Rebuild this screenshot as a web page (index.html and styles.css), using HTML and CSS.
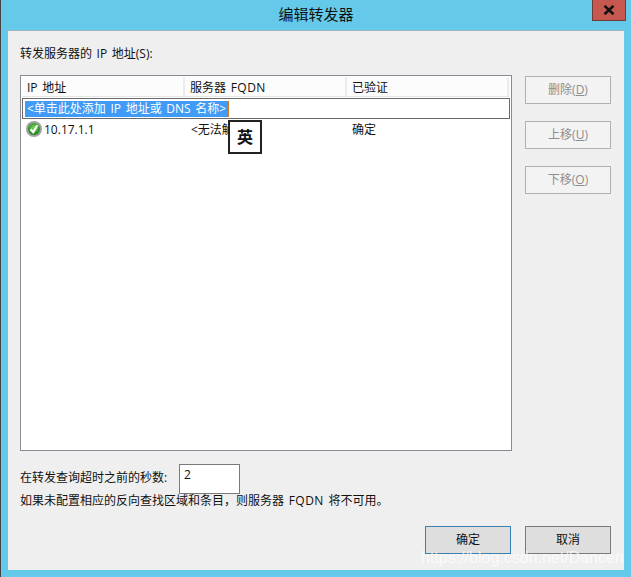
FILE: index.html
```html
<!DOCTYPE html>
<html lang="zh-CN">
<head>
<meta charset="utf-8">
<title>编辑转发器</title>
<link rel="stylesheet" href="styles.css">
</head>
<body>
<div class="window">
  <header class="titlebar">
    <span class="title">编辑转发器</span>
    <button class="close" aria-label="关闭"><svg width="12" height="10" viewBox="0 0 12 10"><path d="M1.5 0.8 L10.5 9.2 M10.5 0.8 L1.5 9.2" stroke="#111" stroke-width="2.6" fill="none"/></svg></button>
  </header>
  <main class="panel">
    <div class="caption">转发服务器的 IP 地址(S):</div>
    <div class="top">
      <div class="list">
        <div class="head">
          <div class="hcell c1">IP 地址</div>
          <div class="hcell c2">服务器 <span class="latin">FQDN</span></div>
          <div class="hcell c3">已验证</div>
        </div>
        <div class="edit"><span class="sel">&lt;单击此处添加 IP 地址或 DNS 名称&gt;</span></div>
        <div class="row">
          <div class="cell c1 ip">
            <svg class="ok" width="16" height="16" viewBox="0 0 16 16">
              <defs><radialGradient id="g" cx="50%" cy="40%" r="60%"><stop offset="0" stop-color="#7fd858"/><stop offset="1" stop-color="#17801a"/></radialGradient></defs>
              <circle cx="8" cy="8" r="8" fill="#a2a2a2"/>
              <circle cx="8" cy="8" r="6" fill="url(#g)"/>
              <path d="M4.6 8.2 L7.2 11.2 L11.4 4.2" stroke="#fff" stroke-width="2.2" fill="none"/>
            </svg>
            <span>10.17.1.1</span>
          </div>
          <div class="cell c2 fq">&lt;无法解析&gt;</div>
          <div class="cell c3 ver">确定</div>
        </div>
        <div class="ime">英</div>
      </div>
      <div class="side">
        <button class="btn off">删除(<u>D</u>)</button>
        <button class="btn off">上移(<u>U</u>)</button>
        <button class="btn off">下移(<u>O</u>)</button>
      </div>
    </div>
    <div class="timeout">
      <label class="tlabel">在转发查询超时之前的秒数:</label>
      <div class="input">2</div>
    </div>
    <div class="note">如果未配置相应的反向查找区域和条目，则服务器 <span class="latin">FQDN</span> 将不可用。</div>
    <div class="actions">
      <button class="btn act primary">确定</button>
      <button class="btn act">取消</button>
    </div>
  </main>
  <div class="mark">https://blog.csdn.net/Dancen</div>
</div>
</body>
</html>
```

FILE: styles.css
```css
* { box-sizing: border-box; }
html, body { margin: 0; height: 100%; }
body {
  font-family: "Open Sans", "Noto Sans CJK SC", sans-serif;
  font-size: 12px;
  word-spacing: 1.5px;
  color: #111;
  background: #65c9ea;
  overflow: hidden;
}
.window {
  position: relative;
  width: 631px;
  height: 577px;
  padding: 0 7px 7px 7px;
  border-left: 1px solid #444;
  display: flex;
  flex-direction: column;
}
.titlebar {
  height: 30px;
  flex: none;
  display: flex;
  justify-content: center;
}
.title { font-size: 15px; line-height: 28px; color: #111; }
.close {
  position: absolute;
  top: 0;
  left: 591px;
  width: 34px;
  height: 21px;
  padding: 0;
  border: 1px solid #6f3a36;
  border-top: 0;
  background: #c75850;
  display: flex;
  align-items: center;
  justify-content: center;
}
.panel {
  flex: 1;
  background: #efefef;
  border-top: 1px solid #9fb4bd;
  padding: 14px 13px 16px 12px;
  display: flex;
  flex-direction: column;
}
.caption { height: 18px; line-height: 18px; }
.latin { letter-spacing: 0.5px; }
.top {
  margin-top: 12px;
  display: flex;
  gap: 13px;
  align-items: flex-start;
}
.list {
  position: relative;
  width: 492px;
  height: 376px;
  background: #fff;
  border: 1px solid #8a8a94;
  padding: 1px;
}
.head { display: flex; height: 20px; background: #fcfcfc; border-bottom: 1px solid #e6e6e6; }
.hcell { line-height: 20px; padding-top: 1px; border-right: 2px solid #ebebeb; padding-left: 5px; }
.c1 { width: 163px; }
.c2 { width: 162px; }
.c3 { width: 162px; }
.edit {
  height: 21px;
  margin-top: 1px;
  border: 1px solid #6a6a6a;
  padding: 2px;
  display: flex;
}
.sel {
  background: #3f9bf5;
  color: #fff;
  height: 16px;
  line-height: 16px;
  padding: 0 2px 0 2px;
  width: 204px;
  border-right: 1px solid #d07a1a;
  white-space: nowrap;
}
.row { display: flex; height: 20px; margin-top: 1px; }
.cell { line-height: 20px; white-space: nowrap; }
.ip { display: flex; align-items: flex-start; gap: 1px; padding-left: 4px; }
.ip span { margin-left: 1px; }
.ok { flex: none; margin-top: 1px; }
.fq { padding-left: 6px; }
.ver { padding-left: 5px; }
.ime {
  position: absolute;
  left: 207px;
  top: 44px;
  width: 34px;
  height: 34px;
  border: 2px solid #222;
  background: #fff;
  font-size: 16px;
  font-weight: 700;
  line-height: 30px;
  text-align: center;
  color: #111;
}
.side {
  display: flex;
  flex-direction: column;
  gap: 17px;
  padding-top: 1px;
}
.btn {
  width: 86px;
  height: 28px;
  padding: 0 0 2px;
  font: inherit;
  word-spacing: inherit;
  color: #111;
  background: #dedede;
  border: 1px solid #7a7a7a;
}
.off { background: #f3f3f3; border-color: #adb2b5; color: #8d8d8d; }
.timeout {
  margin-top: 13px;
  display: flex;
  align-items: center;
}
.tlabel { width: 159px; line-height: 18px; padding-bottom: 3px; }
.input {
  width: 61px;
  height: 30px;
  background: #fff;
  border: 1px solid #7a7a7a;
  padding: 0 4px;
  line-height: 20px;
}
.note { line-height: 14px; }
.actions {
  margin-top: auto;
  display: flex;
  justify-content: flex-end;
  gap: 14px;
}
.primary { border-color: #3c7fb1; }
.mark {
  position: absolute;
  left: 420px;
  top: 547px;
  font-family: "Liberation Sans", sans-serif;
  font-size: 16px;
  line-height: 22px;
  word-spacing: 0;
  white-space: nowrap;
  color: rgba(255, 255, 255, 0.7);
  pointer-events: none;
}
```
